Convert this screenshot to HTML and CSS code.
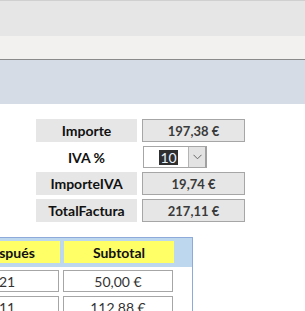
FILE: index.html
```html
<!DOCTYPE html>
<html lang="es">
<head>
<meta charset="utf-8">
<link rel="stylesheet" href="styles.css">
</head>
<body>
<div class="titlebar"></div>
<div class="tabbar"></div>
<div class="formheader"></div>
<section class="summary">
  <div class="label boxed">Importe</div>
  <div class="value">197,38 €</div>
  <div class="label">IVA %</div>
  <div class="select">
    <span class="sel-text"><span class="hl">10</span></span>
    <span class="sel-btn">
      <svg width="9" height="6" viewBox="0 0 9 6"><path d="M0.5 0.8 L4.5 4.8 L8.5 0.8" fill="none" stroke="#666" stroke-width="1"/></svg>
    </span>
  </div>
  <div class="label boxed">ImporteIVA</div>
  <div class="value">19,74 €</div>
  <div class="label boxed">TotalFactura</div>
  <div class="value">217,11 €</div>
</section>
<section class="lines">
  <div class="lines-head">
    <div class="hcell">Después</div>
    <div class="hcell">Subtotal</div>
  </div>
  <div class="lines-body">
    <div class="row">
      <div class="cell">21</div>
      <div class="cell">50,00 €</div>
    </div>
    <div class="row">
      <div class="cell">11</div>
      <div class="cell">112,88 €</div>
    </div>
  </div>
</section>
</body>
</html>
```
FILE: styles.css
```css
html, body {
  margin: 0;
  padding: 0;
  background: #ffffff;
  overflow: hidden;
  font-family: Lato, "Open Sans", "Liberation Sans", sans-serif;
}
.titlebar {
  height: 35px;
  border-top: 1px solid #d0d0d0;
  background: #e6e6e6;
}
.tabbar {
  height: 23px;
  background: #f2f1ef;
  border-bottom: 1px solid #8a8a8a;
}
.formheader {
  height: 44px;
  background: #d5dce6;
}
.summary {
  display: grid;
  grid-template-columns: 101px 103px;
  grid-template-rows: 23px 22px 23px 23px;
  column-gap: 5px;
  row-gap: 4px;
  padding: 15px 0 0 36px;
}
.label {
  display: flex;
  align-items: center;
  justify-content: center;
  font-weight: bold;
  font-size: 14px;
  color: #111;
}
.label.boxed {
  background: #e6e6e6;
}
.value {
  display: flex;
  align-items: center;
  justify-content: center;
  background: #e6e6e6;
  border: 1px solid #a6a6a6;
  font-weight: bold;
  font-size: 13px;
  color: #3a3a3a;
}
.select {
  width: 64px;
  margin-left: 1px;
  box-sizing: border-box;
  display: flex;
  border: 1px solid #a6a6a6;
  border-right: 2px solid #a0a0a0;
  background: #fff;
}
.sel-text {
  flex: 1;
  display: flex;
  align-items: center;
  justify-content: center;
  padding-left: 5px;
}
.hl {
  background: #2f2f2f;
  color: #e8f2ff;
  font-size: 14px;
  line-height: 15px;
  padding: 0 1px;
}
.sel-btn {
  width: 16px;
  background: #e3e3e3;
  border-left: 1px solid #b4b4b4;
  display: flex;
  align-items: center;
  justify-content: center;
}
.lines {
  margin: 15px 0 0 -48px;
  width: 241px;
  border: 1px solid #8eaadb;
  box-sizing: border-box;
}
.lines-head {
  display: grid;
  grid-template-columns: 104px 110px;
  column-gap: 4px;
  background: #bdd7ee;
  padding: 3px 19px 4px 3px;
}
.hcell {
  height: 22px;
  background: #ffff66;
  display: flex;
  align-items: center;
  justify-content: center;
  font-weight: bold;
  font-size: 14px;
  color: #111;
}
.lines-body {
  display: flex;
  flex-direction: column;
  gap: 4px;
  padding: 3px 0 10px 2px;
}
.row {
  display: grid;
  grid-template-columns: 104px 110px;
  column-gap: 4px;
}
.cell {
  height: 22px;
  box-sizing: border-box;
  border: 1px solid #a6a6a6;
  display: flex;
  align-items: center;
  justify-content: center;
  font-size: 14px;
  color: #333;
}
```
